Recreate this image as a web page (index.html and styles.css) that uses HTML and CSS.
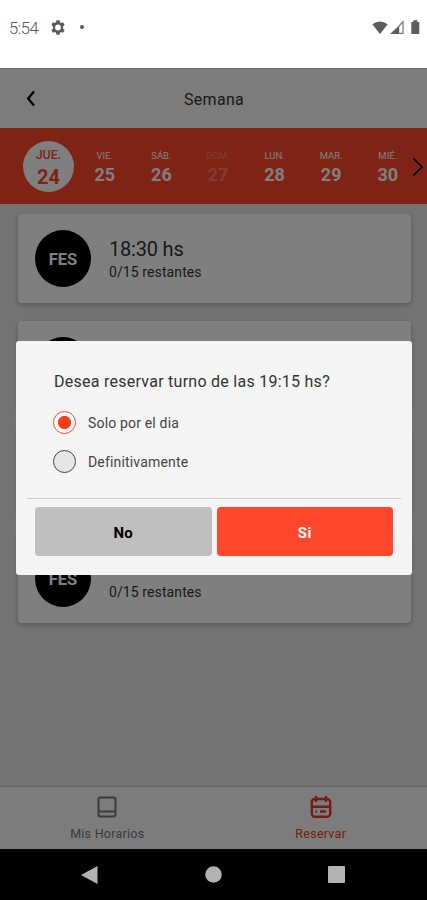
FILE: index.html
```html
<!DOCTYPE html>
<html lang="es">
<head>
<meta charset="utf-8">
<meta name="viewport" content="width=device-width, initial-scale=1">
<title>Semana</title>
<link rel="stylesheet" href="styles.css">
</head>
<body>
<div class="status">
  <span class="clock">5:54</span>
  <svg class="gear" width="14" height="15" viewBox="0 0 14 15"><path d="M5.500.3h3l.5 2 1.100.7 2-.7 1.500 2.600-1.500 1.400v2.400l1.500 1.400-1.500 2.600-2-.7-1.100.7-.5 2h-3l-.5-2-1.100-.7-2 .7L.4 10.100l1.500-1.400V6.300L.4 4.900l1.500-2.600 2 .7L5 2.300z"/><circle cx="7" cy="7.500" r="2.900"/></svg>
  <span class="dot"></span>
  <svg class="signals" width="48" height="16" viewBox="0 0 48 16"><path d="M.3 4.300Q8 -1.500 15.700 4.300L8 14z"/><path d="M27.200 5.500V14H18z"/><path class="rim" d="M26.700 13.400H31V1.800L26 7"/><path d="M39.300 2h2V.3h4V2h2v12h-8z"/></svg>
</div>
<div class="app">
  <header class="header">
    <svg class="back" width="10" height="17" viewBox="0 0 10 17"><path d="M8 1.500 2.200 8.500 8 15.500"/></svg>
    <h1>Semana</h1>
  </header>
  <div class="week">
    <div class="day selected"><small>JUE.</small><b>24</b></div>
    <div class="day"><small>VIE.</small><b>25</b></div>
    <div class="day"><small>SÁB.</small><b>26</b></div>
    <div class="day off"><small>DOM.</small><b>27</b></div>
    <div class="day"><small>LUN.</small><b>28</b></div>
    <div class="day"><small>MAR.</small><b>29</b></div>
    <div class="day"><small>MIÉ.</small><b>30</b></div>
    <svg class="next" width="12" height="20" viewBox="0 0 12 20"><path d="M1.500 1.500 10 10l-8.500 8.500"/></svg>
  </div>
  <main class="list">
    <div class="card"><span class="badge">FES</span><div><div class="hour">18:30 hs</div><div class="left">0/15 restantes</div></div></div>
    <div class="card"><span class="badge"></span></div>
    <div class="card"></div>
    <div class="card"><span class="badge">FES</span><div><div class="hour">&nbsp;</div><div class="left">0/15 restantes</div></div></div>
  </main>
  <nav class="tabs">
    <div class="tab">
      <svg width="20" height="22" viewBox="0 0 20 22"><rect x="1.500" y="1.500" width="17" height="19" rx="2"/><path d="M1.500 15.500h17"/></svg>
      <span>Mis Horarios</span>
    </div>
    <div class="tab active">
      <svg width="22" height="22" viewBox="0 0 22 22"><rect x="1.800" y="3" width="18.400" height="17.800" rx="3"/><path d="M1.500 10.800h19M6 0v6M16 0v6M5.500 15.500h1.500M10 15.500h6"/></svg>
      <span>Reservar</span>
    </div>
  </nav>
  <div class="shade">
    <section class="modal">
      <h2>Desea reservar turno de las 19:15 hs?</h2>
      <div class="option"><span class="radio on"></span><span class="label">Solo por el dia</span></div>
      <div class="option"><span class="radio"></span><span class="label">Definitivamente</span></div>
      <hr>
      <div class="actions"><button class="no">No</button><button class="yes">Si</button></div>
    </section>
  </div>
</div>
<div class="system">
  <svg width="17" height="18" viewBox="0 0 17 18"><path d="M0 9 16.500 0v18z"/></svg>
  <svg width="17" height="17" viewBox="0 0 17 17"><circle cx="8.500" cy="8.500" r="8.300"/></svg>
  <svg width="17" height="17" viewBox="0 0 17 17"><rect width="17" height="17" rx="1"/></svg>
</div>
</body>
</html>
```
FILE: styles.css
```css
* { box-sizing: border-box; }
body {
  margin: 0;
  width: 427px;
  height: 900px;
  overflow: hidden;
  display: flex;
  flex-direction: column;
  font-family: Roboto, "Liberation Sans", sans-serif;
  color: #333;
  background: #fff;
}
.status {
  height: 68px;
  padding: 0 7px 14px 9px;
  display: flex;
  align-items: center;
}
.clock { width: 42px; padding-top: 2px; font-size: 16.500px; letter-spacing: -.4px; font-weight: 300; color: #555; }
.gear path { fill: #5a5a5a; }
.gear circle { fill: #fff; }
.dot { width: 4px; height: 4px; border-radius: 50%; background: #5a5a5a; margin-left: 15px; }
.signals { margin: 2px 0 0 auto; fill: #5c5c5c; }
.signals .rim { fill: none; stroke: #777; stroke-width: 1.200; }
.app {
  position: relative;
  height: 781px;
  display: flex;
  flex-direction: column;
  background: #e6e6e6;
}
.header {
  height: 60px;
  display: grid;
  grid-template-columns: 60px 1fr 60px;
  align-items: center;
  background: #f8f8f8;
  border-top: 1px solid #e0e0e0;
}
.header h1 { margin: 2px 0 0 1px; text-align: center; font-size: 16px; line-height: 18px; font-weight: 400; letter-spacing: .3px; }
.back { margin-left: 26px; fill: none; stroke: #000; stroke-width: 2.400; }
.week {
  height: 76px;
  display: flex;
  align-items: center;
  padding-left: 20px;
  background: #ff472b;
  color: #fff;
}
.day {
  flex: 0 0 56.600px;
  display: flex;
  flex-direction: column;
  align-items: center;
}
.day small { font-size: 9.500px; line-height: 12px; font-weight: 400; margin-top: 2px; }
.day b { font-size: 18px; line-height: 20px; margin-top: 3px; font-weight: 700; }
.day.off { color: #ff7964; }
.day.selected {
  flex-basis: 51px;
  height: 51px;
  margin: 0 2.500px 0 3px;
  border-radius: 50%;
  background: #fff;
  color: #ff472b;
  padding-top: 6px;
}
.selected small { font-size: 12.500px; line-height: 14px; margin: 1px 0 0; font-weight: 500; }
.selected b { font-size: 20px; line-height: 24px; margin-top: 3px; }
.next { flex: none; margin: 2px 0 0 -4px; fill: none; stroke: #000; stroke-width: 1.700; }
.list {
  flex: 1;
  padding: 10px 16px 0 18px;
  display: flex;
  flex-direction: column;
  gap: 17.600px;
}
.card {
  flex: 0 0 89px;
  display: flex;
  align-items: center;
  gap: 18px;
  padding-left: 17px;
  border-radius: 4px;
  background: #fff;
  box-shadow: 0 2px 4px rgba(0, 0, 0, .25);
}
.badge {
  width: 56px;
  height: 57px;
  padding-top: 2px;
  border-radius: 50%;
  background: #000;
  color: #fff;
  font-size: 16.500px;
  font-weight: 700;
  display: flex;
  align-items: center;
  justify-content: center;
}
.hour { font-size: 20px; line-height: 25px; letter-spacing: -.2px; padding-top: 2px; }
.left { font-size: 14px; line-height: 20px; letter-spacing: .1px; }
.tabs {
  height: 63px;
  display: flex;
  background: #f8f8f8;
  border-top: 1px solid #ccc;
}
.tab {
  flex: 1;
  display: flex;
  flex-direction: column;
  align-items: center;
  padding: 9px 0 0 1px;
  font-size: 12.500px;
  line-height: 16px;
  letter-spacing: .25px;
  color: #777;
}
.tab span { margin-top: 8px; }
.tab svg { fill: none; stroke: currentColor; stroke-width: 2; }
.tab.active { color: #f0362a; }
.tab.active svg { stroke-width: 2.400; }
.shade {
  position: absolute;
  inset: 0;
  background: rgba(0, 0, 0, .5);
  padding: 273px 15px 0 16px;
}
.modal {
  height: 234px;
  padding: 29px 11px 0;
  border-radius: 3px;
  background: #f4f4f4;
}
.modal h2 { margin: 0 0 17px 27px; font-size: 16px; line-height: 24px; font-weight: 400; letter-spacing: .26px; }
.option {
  display: flex;
  align-items: center;
  gap: 12px;
  height: 23px;
  margin: 0 0 16px 26px;
  font-size: 14px;
  line-height: 17px;
  letter-spacing: .17px;
  color: #444;
}
.label { padding-top: 2px; }
.radio {
  width: 23px;
  height: 23px;
  border: 1px solid #444;
  border-radius: 50%;
  background: #e6e6e6;
}
.radio.on { border-color: #ff472b; background: radial-gradient(circle, #ff3c1a 6.200px, #fff 7px); }
.modal hr { margin: 25px 0 8px; border: 0; border-top: 1px solid #ccc; }
.actions { display: flex; gap: 5px; padding: 0 8px; }
.actions button {
  flex: 1;
  height: 49px;
  border: 0;
  border-radius: 4px;
  font: 700 15px Roboto, "Liberation Sans", sans-serif;
  letter-spacing: .3px;
  padding-top: 4px;
}
.no { background: #bfbfbf; color: #000; }
.yes { background: #ff472b; color: #fff; }
.system {
  height: 51px;
  display: flex;
  align-items: center;
  justify-content: space-between;
  padding: 0 82px 0 81px;
  background: #000;
  fill: #b3b3b3;
}
```
